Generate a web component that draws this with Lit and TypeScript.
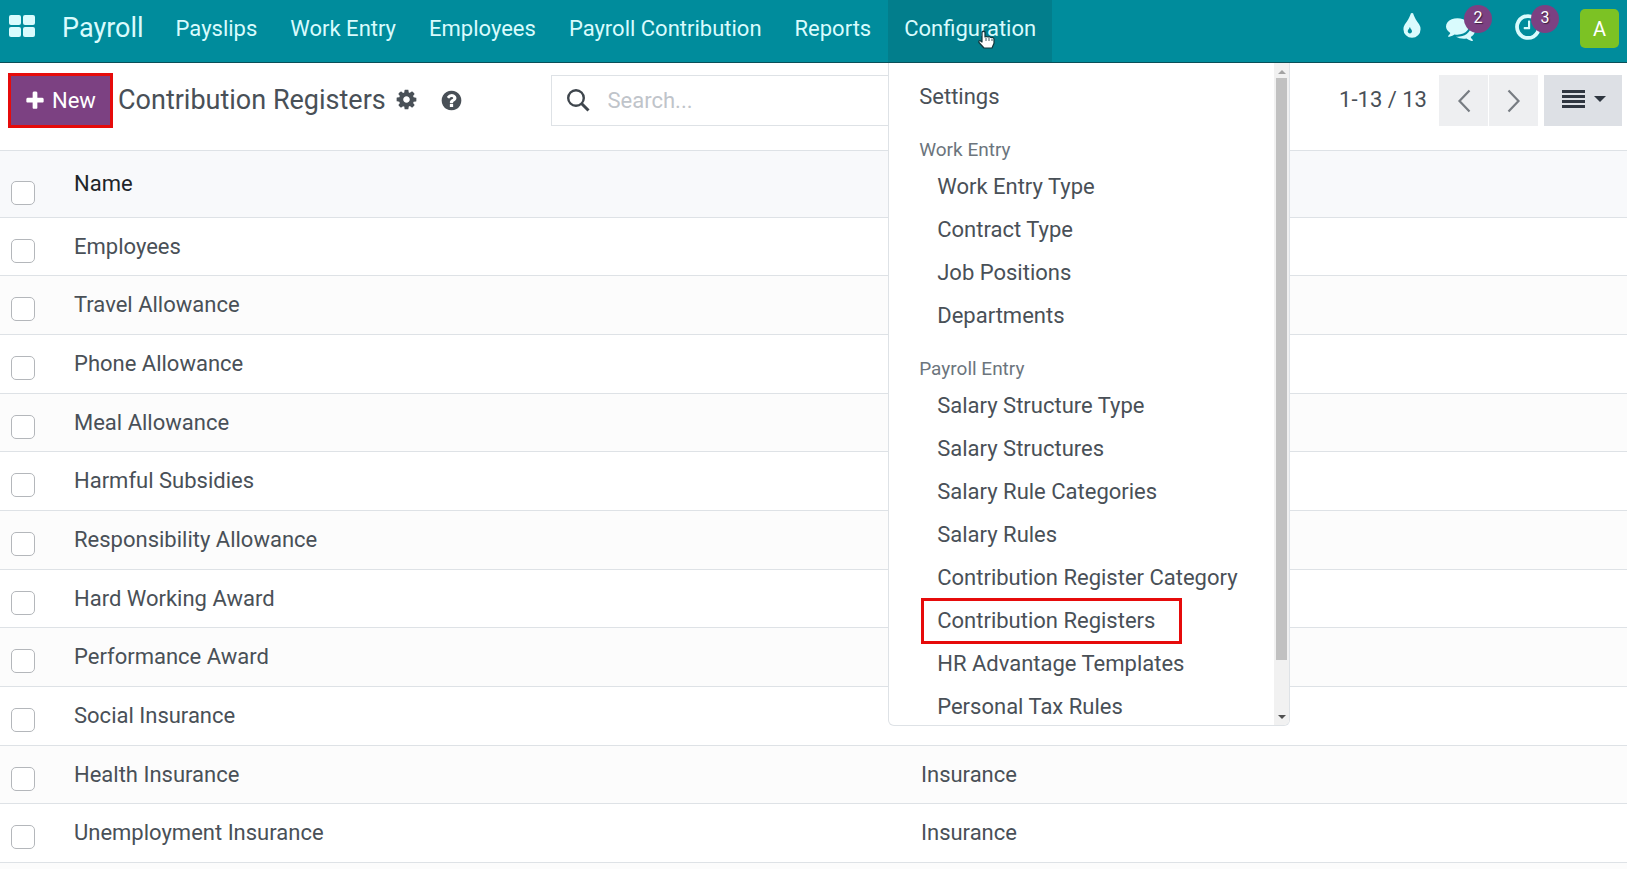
import { LitElement, html, css, svg } from "lit";
import { customElement } from "lit/decorators.js";
import { classMap } from "lit/directives/class-map.js";

const ICONS: Record<string, string> = {
  plus: "M1600 736v192q0 40-28 68t-68 28h-416v416q0 40-28 68t-68 28h-192q-40 0-68-28t-28-68v-416h-416q-40 0-68-28t-28-68v-192q0-40 28-68t68-28h416v-416q0-40 28-68t68-28h192q40 0 68 28t28 68v416h416q40 0 68 28t28 68z",
  cog: "M1152 896q0-106-75-181t-181-75-181 75-75 181 75 181 181 75 181-75 75-181zm512-109v222q0 12-8 23t-20 13l-185 28q-19 54-39 91 35 50 107 138 10 12 10 25t-9 23q-27 37-99 108t-94 71q-12 0-26-9l-138-108q-44 23-91 38-16 136-29 186-7 28-36 28h-222q-14 0-24.5-8.5t-11.5-21.5l-28-184q-49-16-90-37l-141 107q-10 9-25 9-14 0-25-11-126-114-165-168-7-10-7-23 0-12 8-23 15-21 51-66.5t54-70.5q-27-50-41-99l-183-27q-13-2-21-12.5t-8-23.5v-222q0-12 8-23t19-13l186-28q14-46 39-92-40-57-107-138-10-12-10-24 0-10 9-23 26-36 98.5-107.5t94.5-71.5q13 0 26 10l138 107q44-23 91-38 16-136 29-186 7-28 36-28h222q14 0 24.5 8.5t11.5 21.5l28 184q49 16 90 37l142-107q9-9 24-9 13 0 25 10 129 119 165 170 7 8 7 22 0 12-8 23-15 21-51 66.5t-54 70.5q26 50 41 98l183 28q13 2 21 12.5t8 23.5z",
  help: "M1024 1376v-192q0-14-9-23t-23-9h-192q-14 0-23 9t-9 23v192q0 14 9 23t23 9h192q14 0 23-9t9-23zm256-672q0-88-55.5-163t-138.5-116-170-41q-243 0-371 213-15 24 8 42l132 100q7 6 19 6 16 0 25-12 53-68 86-92 34-24 86-24 48 0 85.5 26t37.5 59q0 38-20 61t-68 45q-63 28-115.5 86.5t-52.5 125.500v36q0 14 9 23t23 9h192q14 0 23-9t9-23q0-19 21.5-49.5t54.5-49.5q32-18 49-28.5t46-35 44.5-48 28-60.5 12.5-81zm384 192q0 209-103 385.5t-279.5 279.5-385.5 103-385.5-103-279.5-279.5-103-385.500 103-385.5 279.5-279.5 385.5-103 385.500 103 279.5 279.500 103 385.5z",
  tint: "M896 1152q0-36-20-69-1-1-15.5-22.5t-25.5-38-25-44-21-50.5q-4-16-21-16t-21 16q-7 23-21 50.5t-25 44-25.5 38-15.5 22.5q-20 33-20 69 0 53 37.5 90.500t90.5 37.500 90.5-37.500 37.5-90.500zm512-128q0 212-150 362t-362 150-362-150-150-362q0-145 81-275 6-9 62.500-90.500t101-151 99.5-178 83-201.500q9-30 34-47t51-17 51.500 17 33.500 47q28 93 83 201.500t99.500 178 101 151 62.500 90.500q81 127 81 275z",
  comments: "M1408 768q0 139-94 257t-256.500 186.500-353.500 68.500q-86 0-176-16-124 88-278 128-36 9-86 16h-3q-11 0-20.500-8t-11.500-21q-1-3-1-6.500t.5-6.500 2-6l2.500-5 3.500-5.500 4-5 4.500-5 4-4.500q5-6 23-25t26-29.500 22.500-29 25-38.500 20.500-44q-124-72-195-177t-71-224q0-139 94-257t256.500-186.500 353.500-68.500 353.500 68.500 256.500 186.500 94 257zm384 256q0 120-71 224.500t-195 176.500q10 24 20.500 44t25 38.500 22.500 29 26 29.500 23 25q1 1 4 4.500t4.500 5 4 5 3.500 5.500l2.500 5 2 6 .5 6.500-1 6.500q-3 14-13 22t-22 7q-50-7-86-16-154-40-278-128-90 16-176 16-271 0-472-132 58 4 88 4 161 0 309-45t264-129q125-92 192-212t67-254q0-77-23-152 129 71 204 178t75 230z",
  clock: "M1024 544v448q0 14-9 23t-23 9h-320q-14 0-23-9t-9-23v-64q0-14 9-23t23-9h224v-352q0-14 9-23t23-9h64q14 0 23 9t9 23zm416 352q0-148-73-273t-198-198-273-73-273 73-198 198-73 273 73 273 198 198 273 73 273-73 198-198 73-273zm224 0q0 209-103 385.5t-279.5 279.500-385.5 103-385.5-103-279.5-279.5-103-385.5 103-385.5 279.5-279.5 385.500-103 385.5 103 279.5 279.5 103 385.500z",
};

const icon = (name: string, cls: string) =>
  html`<svg class=${cls} viewBox="0 0 1792 1792" aria-hidden="true">${svg`<path fill="currentColor" d=${ICONS[name]}></path>`}</svg>`;

interface MenuGroup { title: string; items: string[] }

const GROUPS: MenuGroup[] = [
  { title: "Work Entry", items: ["Work Entry Type", "Contract Type", "Job Positions", "Departments"] },
  {
    title: "Payroll Entry",
    items: ["Salary Structure Type", "Salary Structures", "Salary Rule Categories", "Salary Rules",
      "Contribution Register Category", "Contribution Registers", "HR Advantage Templates", "Personal Tax Rules"],
  },
];

const ROWS: { name: string; category: string }[] = [
  { name: "Employees", category: "" },
  { name: "Travel Allowance", category: "" },
  { name: "Phone Allowance", category: "" },
  { name: "Meal Allowance", category: "" },
  { name: "Harmful Subsidies", category: "" },
  { name: "Responsibility Allowance", category: "" },
  { name: "Hard Working Award", category: "" },
  { name: "Performance Award", category: "" },
  { name: "Social Insurance", category: "" },
  { name: "Health Insurance", category: "Insurance" },
  { name: "Unemployment Insurance", category: "Insurance" },
  { name: "", category: "" },
];

@customElement("config-menu")
export class ConfigMenu extends LitElement {
  static styles = css`
    :host {
      display: flex;
      box-sizing: border-box;
      width: 402px;
      height: 663px;
      overflow: hidden;
      background: #fff;
      border: 1px solid #dee2e6;
      border-top: 0;
      border-radius: 0 0 6px 6px;
      font-size: 22px;
      line-height: 31px;
      color: #495057;
    }
    .list { flex: 1; min-width: 0; padding-top: 12px; white-space: nowrap; overflow: hidden; }
    a { display: block; padding: 6px 30px; color: inherit; text-decoration: none; }
    .title { padding: 18px 30px 0; font-size: 19px; line-height: 28px; color: #6c757d; }
    .title + a { margin-top: 1px; }
    .sub { padding-left: 48px; }
    .marked { position: relative; }
    .marked::after {
      content: "";
      position: absolute;
      inset: -1px 92px -2px 32px;
      border: 3px solid #e60b0b;
    }
    .bar { width: 15px; background: #f1f1f1; display: flex; flex-direction: column; align-items: center; }
    .thumb { width: 11px; height: 582px; margin: 4px 0 auto; background: #c1c1c1; }
    .up, .down { border: 4px solid transparent; border-top-width: 0; border-bottom: 4px solid #a3a3a3; margin-top: 7px; }
    .down { border-bottom-width: 0; border-top: 4px solid #505050; margin: 0 0 6px; }
  `;

  render() {
    return html`
      <div class="list">
        <a href="#">Settings</a>
        ${GROUPS.map((g) => html`
          <div class="title">${g.title}</div>
          ${g.items.map((i) => html`<a href="#" class=${classMap({ sub: true, marked: i === "Contribution Registers" })}>${i}</a>`)}
        `)}
      </div>
      <div class="bar"><span class="up"></span><span class="thumb"></span><span class="down"></span></div>
    `;
  }
}

@customElement("app-root")
export class AppRoot extends LitElement {
  static styles = css`
    :host {
      display: flex;
      flex-direction: column;
      height: 100vh;
      overflow: hidden;
      background: #fff;
      font-family: Roboto, "Liberation Sans", sans-serif;
      font-size: 22px;
      line-height: 32px;
      color: #495057;
    }
    * { box-sizing: border-box; }
    button { font: inherit; color: inherit; border: 0; margin: 0; padding: 0; background: none; }

    .navbar {
      display: flex;
      flex: none;
      height: 63px;
      background: #008c9c;
      border-bottom: 1px solid #0b4f58;
      color: #d9fbfd;
      white-space: nowrap;
    }
    .apps { display: flex; padding: 15px 27px 0 9px; }
    .grid-icon { width: 26px; height: 22px; }
    .brand, .nav { color: inherit; text-decoration: none; }
    .brand { font-size: 27px; line-height: 56px; padding-right: 16px; }
    .links { display: flex; gap: 1px; }
    .nav { display: block; height: 62px; line-height: 58px; padding: 0 16px; }
    .entry { position: relative; }
    .open { background: #027e8c; }
    .dropdown { position: absolute; top: 63px; left: 0; z-index: 2; }
    .pointer { position: absolute; left: 89px; top: 30px; width: 19px; height: 20px; }
    .tray { display: flex; margin-left: auto; padding-right: 8px; }
    .tray-button { position: relative; display: flex; }
    .drop-icon { width: 30px; height: 30px; margin: 12px 19px 0 0; }
    .chat-icon { width: 29px; height: 29px; margin: 14px 38px 0 0; }
    .clock-icon { width: 30px; height: 30px; margin: 12px 37px 0 0; }
    .badge {
      position: absolute;
      top: 5px;
      right: 21px;
      width: 28px;
      height: 28px;
      border-radius: 14px;
      background: #7c4182;
      color: #fff;
      font-size: 16px;
      line-height: 25px;
      text-align: center;
      text-shadow: 1px 1px 1px #0008;
    }
    .avatar {
      width: 39px;
      height: 39px;
      margin-top: 9px;
      border-radius: 5px;
      background: #7cc224;
      color: #fff;
      font-size: 20px;
      line-height: 41px;
      text-align: center;
    }

    .panel { display: flex; flex: none; height: 87px; padding: 10px 5px 0 8px; white-space: nowrap; }
    .left { display: flex; flex: 1; align-items: flex-start; }
    .new {
      display: flex;
      align-items: center;
      gap: 6px;
      width: 105px;
      height: 55px;
      padding: 0 0 0 13px;
      background: #7c4182;
      border: 3px solid #e60b0b;
      color: #fff;
    }
    .plus-icon { width: 22px; height: 22px; }
    h1 { margin: 0 9px 0 5px; font-size: 27px; font-weight: 400; line-height: 54px; }
    .cog-icon, .help-icon { width: 23px; height: 23px; display: block; }
    .cog-icon { margin: 15px 22px 0 0; }
    .help-icon { margin-top: 16px; }
    .search {
      display: flex;
      align-items: center;
      flex: 0 0 529px;
      height: 51px;
      margin-top: 2px;
      border: 1px solid #dee2e6;
    }
    .lens { width: 24px; height: 24px; margin: 0 18px 2px 14px; }
    .search input { flex: 1; min-width: 0; border: 0; outline: 0; padding: 0; background: none; font: inherit; color: inherit; }
    .search input::placeholder { color: #bfc4ca; opacity: 1; }
    .right { display: flex; flex: 1; justify-content: flex-end; margin-top: 2px; height: 51px; line-height: 50px; }
    .count { margin-right: 12px; }
    .page { width: 49px; background: #eeeff1; display: grid; place-items: center; margin-right: 1px; }
    .chevron { width: 14px; height: 24px; }
    .view { width: 78px; margin-left: 5px; padding: 0 0 3px 2px; background: #dde0e5; display: flex; align-items: center; justify-content: center; gap: 9px; color: #2f3640; }
    .bars { width: 23px; height: 18px; }
    .caret { width: 12px; height: 6px; }

    .records { flex: 1; min-height: 0; overflow: hidden; }
    table { width: 100%; border-collapse: separate; border-spacing: 0; table-layout: fixed; }
    th, td { padding: 0; text-align: left; font-weight: 400; vertical-align: top; border-bottom: 1px solid #dee2e6; }
    th { height: 68px; padding-top: 17px; color: #212529; background: #f8f9fb; border-top: 1px solid #dee2e6; }
    td { height: 59px; padding-top: 13px; }
    tbody tr:nth-child(3n + 1) td { height: 58px; }
    tbody tr:nth-child(even) td { background: #fcfcfc; }
    .tick-col { width: 74px; }
    .name-col { width: 847px; }
    input[type="checkbox"] {
      appearance: none;
      display: block;
      width: 24px;
      height: 24px;
      margin: 8px 0 0 11px;
      border: 1px solid #b4b7bb;
      border-radius: 5px;
      background: #fff;
    }
    th input[type="checkbox"] { margin-top: 13px; }
  `;

  render() {
    return html`
      <nav class="navbar">
        <button class="apps" aria-label="Home menu">
          <svg class="grid-icon" viewBox="0 0 26 22" fill="currentColor">
            <rect width="12" height="10" rx="2"></rect><rect x="14" width="12" height="10" rx="2"></rect>
            <rect y="12" width="12" height="10" rx="2"></rect><rect x="14" y="12" width="12" height="10" rx="2"></rect>
          </svg>
        </button>
        <a class="brand" href="#">Payroll</a>
        <div class="links">
          ${["Payslips", "Work Entry", "Employees", "Payroll Contribution", "Reports"].map((n) => html`<a class="nav" href="#">${n}</a>`)}
          <div class="entry open">
            <a class="nav" href="#">Configuration</a>
            <config-menu class="dropdown"></config-menu>
            <svg class="pointer" viewBox="0 0 19 20">
              <path d="M5 2q1.500-1.500 3 0v5l1.500-.5 1.500.5 1.500-.3 1.500.8 1.500-.2q1.500.5 1.500 2v4l-2 4.700H7L2 12.500q-.5-2 1-2l2 1.500z" fill="#fff" stroke="#12343a" stroke-width="1.200" stroke-linejoin="round"></path>
              <path d="M9 8v3M12 8v3M15 8.500v2.500" stroke="#12343a" stroke-width=".8"></path>
            </svg>
          </div>
        </div>
        <div class="tray">
          <button class="tray-button" aria-label="Theme">${icon("tint", "drop-icon")}</button>
          <button class="tray-button" aria-label="Messages">${icon("comments", "chat-icon")}<span class="badge">2</span></button>
          <button class="tray-button" aria-label="Activities">${icon("clock", "clock-icon")}<span class="badge">3</span></button>
          <button class="avatar">A</button>
        </div>
      </nav>

      <header class="panel">
        <div class="left">
          <button class="new">${icon("plus", "plus-icon")}New</button>
          <h1>Contribution Registers</h1>
          <button aria-label="Actions">${icon("cog", "cog-icon")}</button>
          <button aria-label="Help">${icon("help", "help-icon")}</button>
        </div>
        <label class="search">
          <svg class="lens" viewBox="0 0 24 24" fill="none" stroke="#3f464d" aria-hidden="true">
            <circle cx="10" cy="10" r="7.800" stroke-width="2.400"></circle><path d="M15.500 15.500L22.500 22.500" stroke-width="3"></path>
          </svg>
          <input type="text" placeholder="Search..." aria-label="Search" />
        </label>
        <div class="right">
          <span class="count">1-13 / 13</span>
          <button class="page" aria-label="Previous">
            <svg class="chevron" viewBox="0 0 14 24" fill="none" stroke="#777c82" stroke-width="2.200"><path d="M12.500 1.500L2.500 12l10 10.500"></path></svg>
          </button>
          <button class="page" aria-label="Next">
            <svg class="chevron" viewBox="0 0 14 24" fill="none" stroke="#777c82" stroke-width="2.200"><path d="M1.500 1.500L11.500 12l-10 10.500"></path></svg>
          </button>
          <button class="view" aria-label="List view">
            <svg class="bars" viewBox="0 0 23 18" fill="currentColor"><path d="M0 0h23v3H0zM0 5h23v3H0zM0 10h23v3H0zM0 15h23v3H0z"></path></svg>
            <svg class="caret" viewBox="0 0 12 6" fill="currentColor"><path d="M0 0h12L6 6z"></path></svg>
          </button>
        </div>
      </header>

      <main class="records">
        <table>
          <colgroup><col class="tick-col" /><col class="name-col" /><col /></colgroup>
          <thead>
            <tr><th><input type="checkbox" aria-label="Select all" /></th><th>Name</th><th></th></tr>
          </thead>
          <tbody>
            ${ROWS.map((r) => html`
              <tr><td><input type="checkbox" aria-label=${"Select " + r.name} /></td><td>${r.name}</td><td>${r.category}</td></tr>
            `)}
          </tbody>
        </table>
      </main>
    `;
  }
}
